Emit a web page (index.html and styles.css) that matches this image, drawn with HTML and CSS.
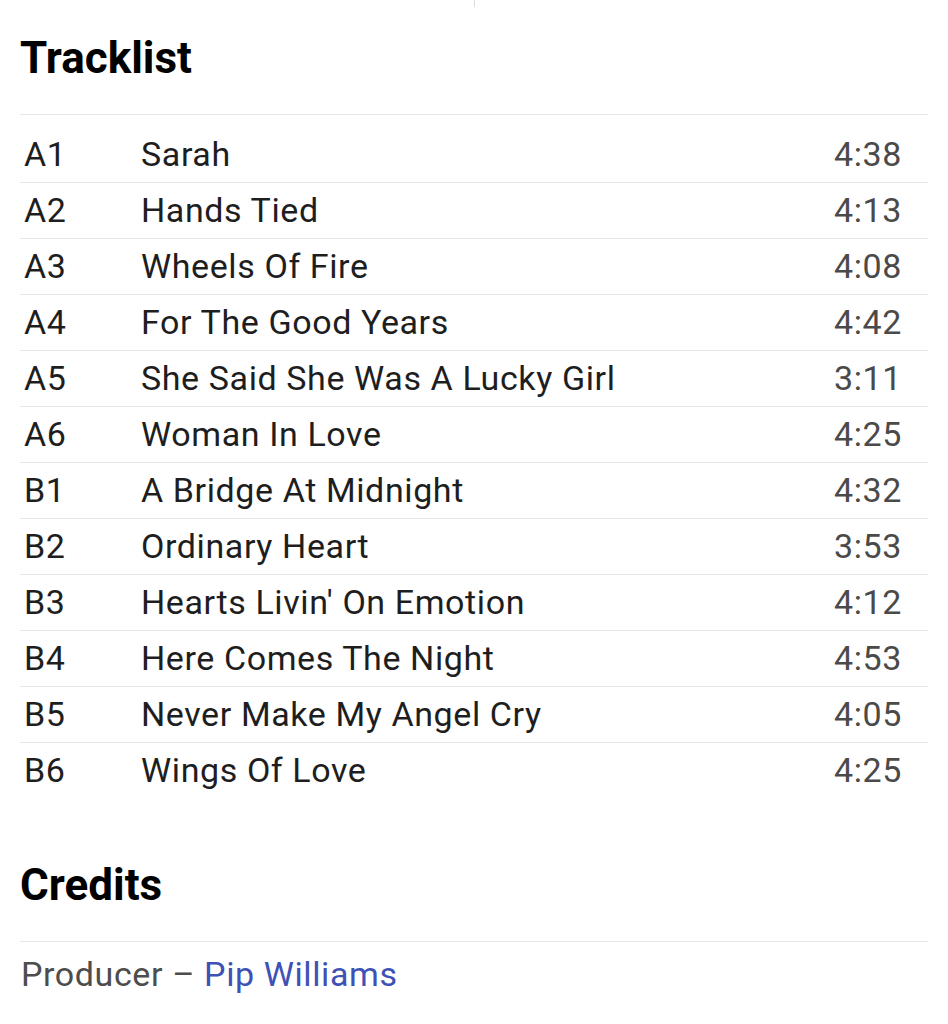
FILE: index.html
```html
<!DOCTYPE html>
<html lang="en">
<head>
<meta charset="utf-8">
<title>Tracklist</title>
<link rel="stylesheet" href="styles.css">
</head>
<body>
<div class="top-divider"></div>
<main class="page">
  <section class="section">
    <h2 class="section-title">Tracklist</h2>
    <div class="tracklist">
      <div class="track"><span class="pos">A1</span><span class="title">Sarah</span><span class="dur">4:38</span></div>
      <div class="track"><span class="pos">A2</span><span class="title">Hands Tied</span><span class="dur">4:13</span></div>
      <div class="track"><span class="pos">A3</span><span class="title">Wheels Of Fire</span><span class="dur">4:08</span></div>
      <div class="track"><span class="pos">A4</span><span class="title">For The Good Years</span><span class="dur">4:42</span></div>
      <div class="track"><span class="pos">A5</span><span class="title">She Said She Was A Lucky Girl</span><span class="dur">3:11</span></div>
      <div class="track"><span class="pos">A6</span><span class="title">Woman In Love</span><span class="dur">4:25</span></div>
      <div class="track"><span class="pos">B1</span><span class="title">A Bridge At Midnight</span><span class="dur">4:32</span></div>
      <div class="track"><span class="pos">B2</span><span class="title">Ordinary Heart</span><span class="dur">3:53</span></div>
      <div class="track"><span class="pos">B3</span><span class="title">Hearts Livin' On Emotion</span><span class="dur">4:12</span></div>
      <div class="track"><span class="pos">B4</span><span class="title">Here Comes The Night</span><span class="dur">4:53</span></div>
      <div class="track"><span class="pos">B5</span><span class="title">Never Make My Angel Cry</span><span class="dur">4:05</span></div>
      <div class="track"><span class="pos">B6</span><span class="title">Wings Of Love</span><span class="dur">4:25</span></div>
    </div>
  </section>
  <section class="section">
    <h2 class="section-title">Credits</h2>
    <div class="credits">
      <p class="credit">Producer – <a class="credit-link" href="#">Pip Williams</a></p>
    </div>
  </section>
</main>
</body>
</html>
```

FILE: styles.css
```css
html, body {
  margin: 0;
  padding: 0;
  background: #ffffff;
}

body {
  font-family: Roboto, "Liberation Sans", Arial, sans-serif;
  color: #222222;
}

.top-divider {
  width: 1px;
  height: 7px;
  margin: 0 auto;
  background: #dcdcdc;
}

.page {
  padding: 0 20px;
}

.section-title {
  margin: 0;
  padding-top: 25px;
  font-size: 44px;
  line-height: 52px;
  font-weight: 700;
  color: #000000;
  padding-bottom: 30px;
}

.section + .section .section-title {
  padding-top: 61px;
}

.tracklist {
  border-top: 1px solid #e6e6e6;
  padding-top: 12px;
}

.track {
  display: grid;
  grid-template-columns: 120px 1fr auto;
  align-items: center;
  height: 55px;
  font-size: 34px;
  line-height: 55px;
  letter-spacing: 0.6px;
}

.track + .track {
  border-top: 1px solid #e6e6e6;
}

.pos {
  padding-left: 4px;
  color: #1e1e1e;
}

.title {
  padding-left: 1px;
  color: #1e1e1e;
}

.dur {
  padding-right: 26px;
  color: #4a4a4a;
}

.credits {
  border-top: 1px solid #e6e6e6;
  padding-top: 5px;
}

.credit {
  margin: 0;
  font-size: 34px;
  line-height: 55px;
  letter-spacing: 0.6px;
  color: #4d4d4d;
  padding-left: 1px;
}

.credit-link {
  color: #3f51b5;
  text-decoration: none;
}
```
